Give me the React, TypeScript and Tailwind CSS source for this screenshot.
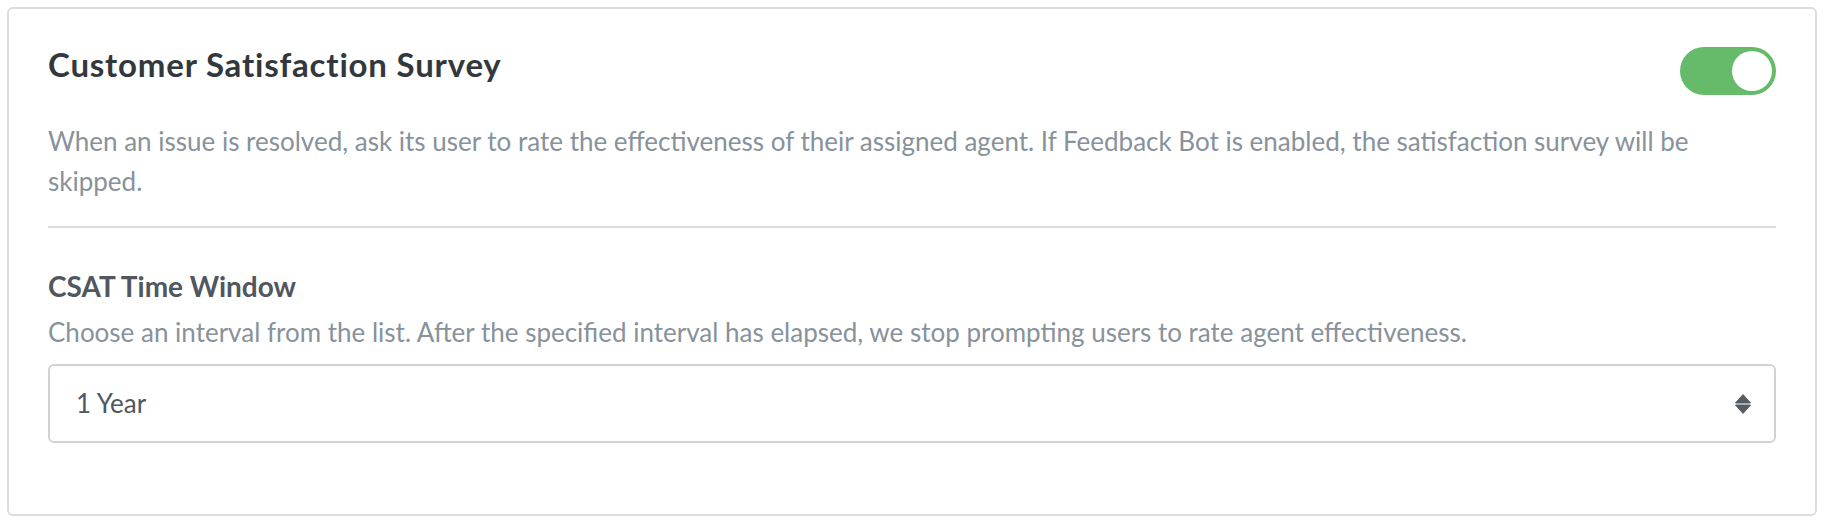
import { useState } from 'react'

function Toggle({ on, onChange }: { on: boolean; onChange: (v: boolean) => void }) {
  return (
    <button
      type="button"
      onClick={() => onChange(!on)}
      className={`mt-[3px] flex h-[48px] w-[96px] shrink-0 items-center rounded-full p-[4px] ${
        on ? 'justify-end bg-[#66bb6a]' : 'justify-start bg-[#c8cdd1]'
      }`}
    >
      <span className="block h-[40px] w-[40px] rounded-full bg-white" />
    </button>
  )
}

function SortArrows() {
  return (
    <svg width="16" height="20" viewBox="0 0 16 20" className="shrink-0">
      <path d="M8 0.5 L15.5 9 L0.5 9 Z" fill="#555d64" stroke="#555d64" strokeLinejoin="round" />
      <path d="M0.5 11 L15.5 11 L8 19.5 Z" fill="#555d64" stroke="#555d64" strokeLinejoin="round" />
    </svg>
  )
}

export default function App() {
  const [enabled, setEnabled] = useState(true)
  const [windowValue] = useState('1 Year')

  return (
    <div className="min-h-screen bg-white p-[7px] font-['Lato',sans-serif]">
      <div className="rounded-md border-2 border-[#dcdcdc] px-[39px] pt-[35px] pb-[71px]">
        {/* header */}
        <div className="flex items-start justify-between">
          <h2 className="text-[33px] leading-[40px] font-bold tracking-[0.8px] text-[#33383d]">
            Customer Satisfaction Survey
          </h2>
          <Toggle on={enabled} onChange={setEnabled} />
        </div>
        <p className="mt-[26px] text-[26px] leading-[40px] text-[#87929b]">
          When an issue is resolved, ask its user to rate the effectiveness of their assigned agent. If Feedback
          Bot is enabled, the satisfaction survey will be skipped.
        </p>

        <div className="mt-[25px] h-[2px] bg-[#dadada]" />

        <div className="mt-[41px]">
          <label className="block text-[28px] leading-[34px] font-bold text-[#50575e]">CSAT Time Window</label>
          <p className="mt-[13px] text-[26px] leading-[32px] text-[#87929b]">
            Choose an interval from the list. After the specified interval has elapsed, we stop prompting users to
            rate agent effectiveness.
          </p>
          <div className="mt-[16px] flex h-[79px] items-center justify-between rounded-md border-2 border-[#d2d2d2] pr-[23px] pl-[26px]">
            <span className="text-[26px] text-[#50575e]">{windowValue}</span>
            <SortArrows />
          </div>
        </div>
      </div>
    </div>
  )
}
